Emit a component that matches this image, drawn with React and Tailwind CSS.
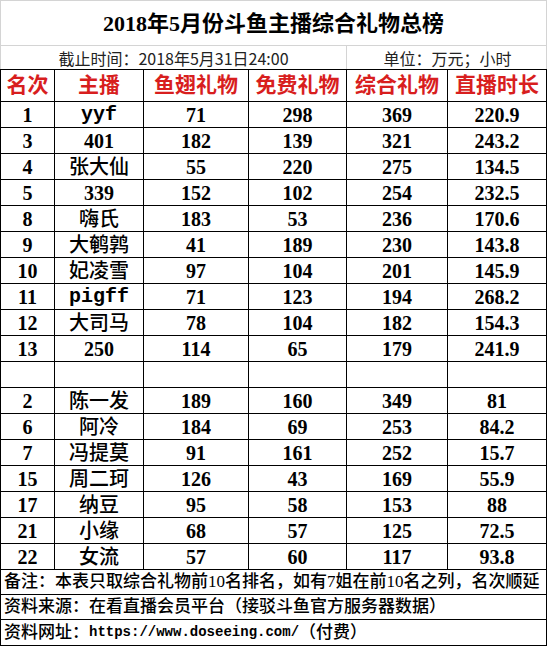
const rows = [
    ["1", "yyf", "71", "298", "369", "220.9"],
    ["3", "401", "182", "139", "321", "243.2"],
    ["4", "张大仙", "55", "220", "275", "134.5"],
    ["5", "339", "152", "102", "254", "232.5"],
    ["8", "嗨氏", "183", "53", "236", "170.6"],
    ["9", "大鹌鹑", "41", "189", "230", "143.8"],
    ["10", "妃凌雪", "97", "104", "201", "145.9"],
    ["11", "pigff", "71", "123", "194", "268.2"],
    ["12", "大司马", "78", "104", "182", "154.3"],
    ["13", "250", "114", "65", "179", "241.9"],
    null,
    ["2", "陈一发", "189", "160", "349", "81"],
    ["6", "阿冷", "184", "69", "253", "84.2"],
    ["7", "冯提莫", "91", "161", "252", "15.7"],
    ["15", "周二珂", "126", "43", "169", "55.9"],
    ["17", "纳豆", "95", "58", "153", "88"],
    ["21", "小缘", "68", "57", "125", "72.5"],
    ["22", "女流", "57", "60", "117", "93.8"],
];

const headers = ["名次", "主播", "鱼翅礼物", "免费礼物", "综合礼物", "直播时长"];

// cell class shared by header + data cells
const cell = "flex items-center justify-center border-r border-b border-black";

function DataRow({ row }) {
    // empty spacer row between the two groups
    if (!row) {
        return headers.map((h) => <div key={h} className={`${cell} h-[26px]`} />);
    }
    return row.map((v, i) => {
        const latinName = i === 1 && /^[a-z]+$/.test(v);
        const cjkName = i === 1 && !/^[a-z0-9]+$/.test(v);
        return (
            <div
                key={i}
                className={`${cell} h-[26px] text-[20px] ${cjkName ? "font-medium" : "font-bold"} ${
                    latinName ? "font-['Liberation_Mono','Noto_Sans_CJK_SC',monospace]" : ""
                }`}
            >
                {v}
            </div>
        );
    });
}

export default function App() {
    return (
        <div className="w-[551px] h-[648px] bg-white text-black font-['Liberation_Serif','Noto_Sans_CJK_SC',serif]">
            {/* title */}
            <div className="w-[547px] h-[46px] border border-[#d4d4d4] flex items-center justify-center text-[22px] font-bold">
                2018年5月份斗鱼主播综合礼物总榜
            </div>

            {/* subtitle */}
            <div className="w-[547px] h-[23px] grid grid-cols-[346px_201px] border-l border-r border-[#d4d4d4] font-['Noto_Sans_CJK_SC',sans-serif] text-[16px] text-[#222]">
                <div className="flex items-center justify-center border-r border-[#d4d4d4] leading-none">
                    截止时间：2018年5月31日24:00
                </div>
                <div className="flex items-center justify-center leading-none">单位：万元；小时</div>
            </div>

            {/* table */}
            <div className="w-[547px] grid grid-cols-[54px_89px_105px_98px_101px_99px] border-l border-t border-black">
                {headers.map((h) => (
                    <div key={h} className={`${cell} h-[32px] text-[21px] font-bold text-[#d81e1e]`}>
                        {h}
                    </div>
                ))}
                {rows.map((r, i) => (
                    <DataRow key={i} row={r} />
                ))}

                <div className="col-span-6 h-[25px] flex items-center pl-[3px] border-r border-b border-black text-[17px] font-medium whitespace-nowrap">
                    备注：本表只取综合礼物前10名排名，如有7姐在前10名之列，名次顺延
                </div>
                <div className="col-span-6 h-[25px] flex items-center pl-[3px] border-r border-b border-black text-[17px] font-medium whitespace-nowrap">
                    资料来源：在看直播会员平台（接驳斗鱼官方服务器数据）
                </div>
                <div className="col-span-6 h-[26px] flex items-center pl-[3px] border-r border-b border-black text-[17px] font-medium whitespace-nowrap">
                    资料网址：
                    <span className="font-['Liberation_Mono',monospace] text-[14px] font-bold">https://www.doseeing.com/</span>
                    （付费）
                </div>
            </div>
        </div>
    );
}
